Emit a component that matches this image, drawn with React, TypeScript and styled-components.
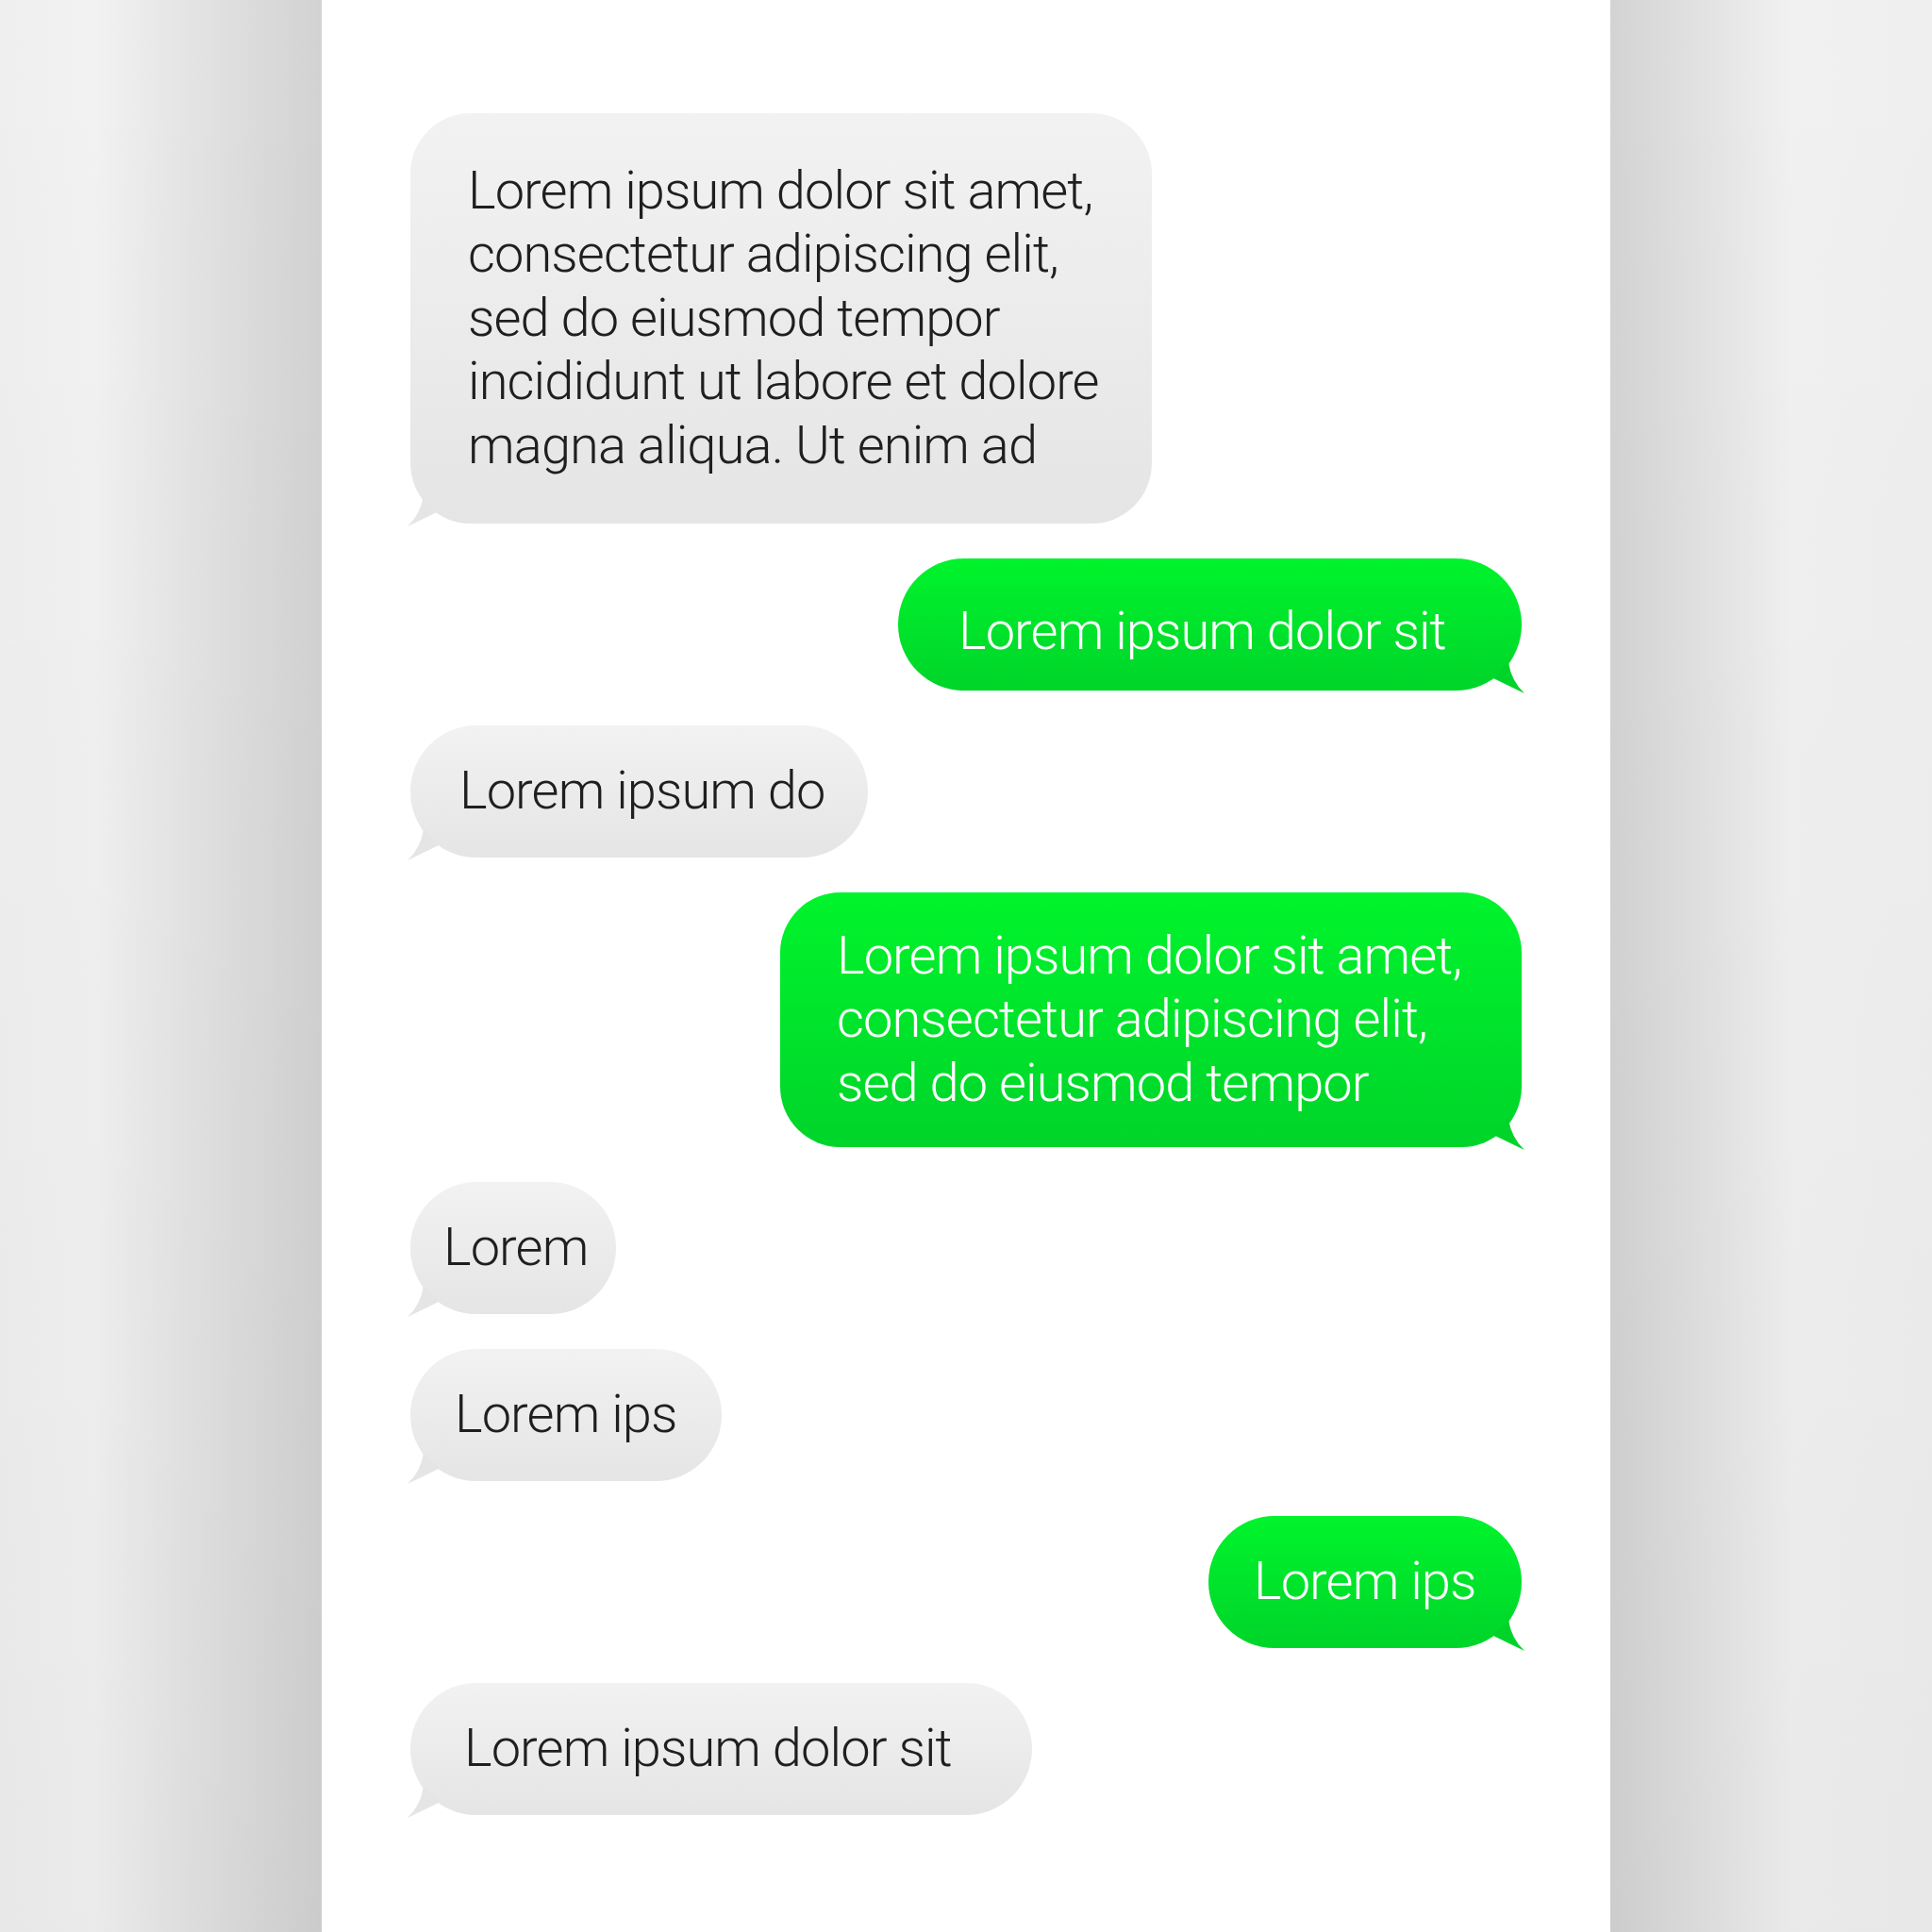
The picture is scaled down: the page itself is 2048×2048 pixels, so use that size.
import React from 'react';
import styled, { createGlobalStyle } from 'styled-components';

const GlobalStyle = createGlobalStyle`
  html, body {
    margin: 0;
    padding: 0;
  }
  body {
    font-family: Roboto, "Liberation Sans", sans-serif;
  }
`;

type Side = 'left' | 'right';

interface Message {
  side: Side;
  width: number;
  height: number;
  pad: number;
  radius?: number;
  drop?: number;
  text: string;
}

const messages: Message[] = [
  {
    side: 'left',
    width: 786,
    height: 435,
    pad: 61,
    radius: 64,
    text: 'Lorem ipsum dolor sit amet,\nconsectetur adipiscing elit,\nsed do eiusmod tempor\nincididunt ut labore et dolore\nmagna aliqua. Ut enim ad',
  },
  { side: 'right', width: 661, height: 140, pad: 64, drop: 16, text: 'Lorem ipsum dolor sit' },
  { side: 'left', width: 485, height: 140, pad: 52, text: 'Lorem ipsum do' },
  {
    side: 'right',
    width: 786,
    height: 270,
    pad: 60,
    radius: 64,
    text: 'Lorem ipsum dolor sit amet,\nconsectetur adipiscing elit,\nsed do eiusmod tempor',
  },
  { side: 'left', width: 218, height: 140, pad: 35, text: 'Lorem' },
  { side: 'left', width: 330, height: 140, pad: 47, text: 'Lorem ips' },
  { side: 'right', width: 332, height: 140, pad: 48, text: 'Lorem ips' },
  { side: 'left', width: 659, height: 140, pad: 57, text: 'Lorem ipsum dolor sit' },
];

const colors = {
  grayTop: '#f2f2f2',
  grayBottom: '#e5e5e5',
  greenTop: '#00f42c',
  greenBottom: '#00d42a',
};

const Page = styled.div`
  display: flex;
  width: 2048px;
  height: 2048px;
  overflow: hidden;
`;

const Shade = styled.div<{ $side: Side }>`
  flex: 1;
  background: ${(p) =>
    p.$side === 'left'
      ? 'linear-gradient(to right, #efefef 0px, #f2f2f2 100px, #e4e4e4 200px, #d2d2d2 341px)'
      : 'linear-gradient(to left, #efefef 0px, #f1f1f1 148px, #e4e4e4 230px, #d3d3d3 341px)'};
  position: relative;

  &::after {
    content: '';
    position: absolute;
    inset: 0;
    background: linear-gradient(to bottom, rgba(0, 0, 0, 0), rgba(0, 0, 0, 0.03));
  }
`;

const Panel = styled.div`
  width: 1366px;
  flex: none;
  background: #ffffff;
  box-sizing: border-box;
  padding: 120px 94px 0;
  display: flex;
  flex-direction: column;
  gap: 37px;
`;

const Row = styled.div<{ $side: Side }>`
  display: flex;
  justify-content: ${(p) => (p.$side === 'left' ? 'flex-start' : 'flex-end')};
`;

const Bubble = styled.div<{
  $side: Side;
  $width: number;
  $height: number;
  $pad: number;
  $radius: number;
  $drop: number;
}>`
  position: relative;
  box-sizing: border-box;
  width: ${(p) => p.$width}px;
  height: ${(p) => p.$height}px;
  padding-left: ${(p) => p.$pad}px;
  padding-top: ${(p) => p.$drop}px;
  border-radius: ${(p) => p.$radius}px;
  display: flex;
  align-items: center;
  background: ${(p) =>
    p.$side === 'left'
      ? `linear-gradient(to bottom, ${colors.grayTop}, ${colors.grayBottom})`
      : `linear-gradient(to bottom, ${colors.greenTop}, ${colors.greenBottom})`};
  color: ${(p) => (p.$side === 'left' ? '#1f1f1f' : '#ffffff')};
`;

const Text = styled.div`
  font-family: Roboto, "Liberation Sans", sans-serif;
  font-weight: 300;
  font-size: 56px;
  letter-spacing: -0.9px;
  line-height: 67.5px;
  white-space: pre-line;
`;

const Tail = styled.svg<{ $side: Side }>`
  position: absolute;
  bottom: -3px;
  width: 40px;
  height: 40px;
  ${(p) => (p.$side === 'left' ? 'left: -4px;' : 'right: -4px; transform: scaleX(-1);')}
`;

const BubbleTail = ({ side }: { side: Side }) => (
  <Tail $side={side} viewBox="0 0 40 40">
    <path
      d="M18 7 Q15 27 1 40 L34 24 Z"
      fill={side === 'left' ? colors.grayBottom : colors.greenBottom}
    />
  </Tail>
);

export default function App() {
  return (
    <>
      <GlobalStyle />
      <Page>
        <Shade $side="left" />
        <Panel>
          {messages.map((m, i) => (
            <Row key={i} $side={m.side}>
              <Bubble
                $side={m.side}
                $width={m.width}
                $height={m.height}
                $pad={m.pad}
                $radius={m.radius ?? m.height / 2}
                $drop={m.drop ?? 0}
              >
                <Text>{m.text}</Text>
                <BubbleTail side={m.side} />
              </Bubble>
            </Row>
          ))}
        </Panel>
        <Shade $side="right" />
      </Page>
    </>
  );
}
